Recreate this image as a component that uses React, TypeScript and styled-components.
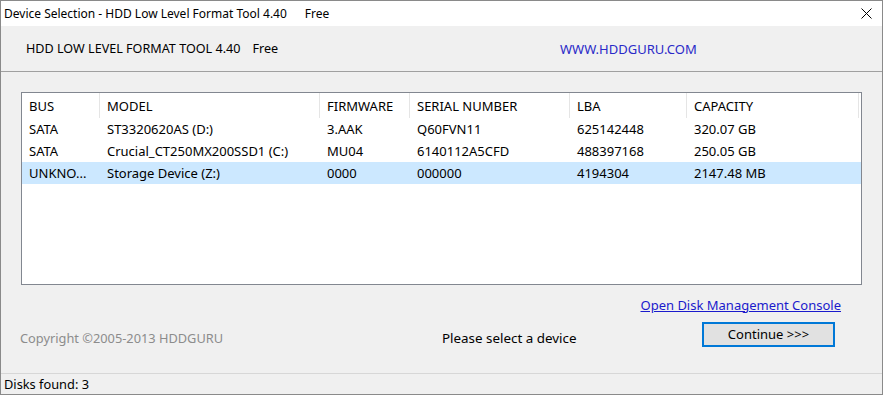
import React from "react";
import styled, { createGlobalStyle } from "styled-components";

const Global = createGlobalStyle`
  html, body { margin: 0; padding: 0; background: #ffffff; }
  body { font-family: "Noto Sans", "Open Sans", sans-serif; font-size: 12px; color: #000; }
  * { box-sizing: border-box; }
`;

const Window = styled.div`
  width: 883px;
  height: 395px;
  border: 1px solid #8a8a8a;
  display: flex;
  flex-direction: column;
  background: #f0f0f0;
  overflow: hidden;
`;

const TitleBar = styled.div`
  height: 25px;
  background: #ffffff;
  display: flex;
  align-items: center;
  padding-left: 3px;
  padding-right: 10px;
  flex-shrink: 0;
`;

const TitleText = styled.div`
  flex: 1;
  white-space: nowrap;
  font-size: 12px;
`;

const Suffix = styled.span<{ $gap: number }>`
  margin-left: ${(p) => p.$gap}px;
`;

const CloseBtn = styled.div`
  width: 12px;
  height: 12px;
  display: flex;
  align-items: center;
  justify-content: center;
`;

const Header = styled.div`
  height: 46px;
  display: flex;
  align-items: center;
  border-bottom: 1px solid #a0a0a0;
  flex-shrink: 0;
`;

const HeaderTitle = styled.div`
  width: 559px;
  padding-left: 25px;
  white-space: nowrap;
  font-size: 12.6px;
`;

const HeaderLink = styled.div`
  color: #2a2ac8;
  font-size: 13px;
`;

const Body = styled.div`
  flex: 1;
  display: flex;
  flex-direction: column;
  padding: 20px 20px 0 20px;
`;

const TableBox = styled.div`
  width: 841px;
  height: 193px;
  border: 1px solid #828790;
  background: #ffffff;
`;

const Row = styled.div<{ $head?: boolean; $selected?: boolean }>`
  display: grid;
  grid-template-columns: 78px 220px 90px 160px 117px 172px;
  height: ${(p) => (p.$head ? "25px" : "22px")};
  background: ${(p) => (p.$selected ? "#cce8ff" : "transparent")};
  align-items: center;
  font-size: 13px;
`;

const Cell = styled.div<{ $head?: boolean }>`
  padding-left: 7px;
  height: 100%;
  display: flex;
  align-items: center;
  white-space: nowrap;
  overflow: hidden;
  border-right: ${(p) => (p.$head ? "1px solid #e5e5e5" : "none")};
  padding-top: ${(p) => (p.$head ? "1px" : "0")};
`;

const LinkRow = styled.div`
  display: flex;
  justify-content: flex-end;
  padding-right: 21px;
  margin-top: 11px;
  height: 17px;
  align-items: center;
`;

const Link = styled.a`
  color: #1a1acc;
  text-decoration: underline;
  font-size: 13px;
  cursor: pointer;
`;

const BottomRow = styled.div`
  display: flex;
  align-items: flex-start;
  margin-top: 9px;
  height: 40px;
`;

const Copyright = styled.div`
  width: 422px;
  color: #8c8c8c;
  font-size: 12.8px;
  margin-top: 7px;
  margin-left: -1px;
`;

const Message = styled.div`
  width: 260px;
  font-size: 13.4px;
  margin-top: 7px;
`;

const Button = styled.button`
  width: 133px;
  height: 25px;
  border: 2px solid #0078d7;
  background: #e1e1e1;
  font-family: inherit;
  font-size: 13px;
  color: #000;
  padding: 0 0 2px 0;
  margin-left: 0;
`;

const StatusBar = styled.div`
  height: 21px;
  border-top: 1px solid #d7d7d7;
  display: flex;
  align-items: center;
  padding-left: 3px;
  font-size: 12.8px;
  flex-shrink: 0;
`;

const rows = [
  ["SATA", "ST3320620AS (D:)", "3.AAK", "Q60FVN11", "625142448", "320.07 GB"],
  ["SATA", "Crucial_CT250MX200SSD1 (C:)", "MU04", "6140112A5CFD", "488397168", "250.05 GB"],
  ["UNKNO...", "Storage Device (Z:)", "0000", "000000", "4194304", "2147.48 MB"],
];

const heads = ["BUS", "MODEL", "FIRMWARE", "SERIAL NUMBER", "LBA", "CAPACITY"];

export default function App() {
  return (
    <>
      <Global />
      <Window>
        <TitleBar>
          <TitleText>
            Device Selection - HDD Low Level Format Tool 4.40
            <Suffix $gap={18}>Free</Suffix>
          </TitleText>
          <CloseBtn>
            <svg width="11" height="11" viewBox="0 0 11 11">
              <path d="M0.5 0.5 L10.5 10.5 M10.5 0.5 L0.5 10.5" stroke="#000" strokeWidth="1" />
            </svg>
          </CloseBtn>
        </TitleBar>
        <Header>
          <HeaderTitle>
            HDD LOW LEVEL FORMAT TOOL 4.40
            <Suffix $gap={12}>Free</Suffix>
          </HeaderTitle>
          <HeaderLink>WWW.HDDGURU.COM</HeaderLink>
        </Header>
        <Body>
          <TableBox>
            <Row $head>
              {heads.map((h) => (
                <Cell $head key={h}>{h}</Cell>
              ))}
            </Row>
            {rows.map((r, i) => (
              <Row key={i} $selected={i === 2}>
                {r.map((c, j) => (
                  <Cell key={j}>{c}</Cell>
                ))}
              </Row>
            ))}
          </TableBox>
          <LinkRow>
            <Link>Open Disk Management Console</Link>
          </LinkRow>
          <BottomRow>
            <Copyright>Copyright ©2005-2013 HDDGURU</Copyright>
            <Message>Please select a device</Message>
            <Button>Continue &gt;&gt;&gt;</Button>
          </BottomRow>
        </Body>
        <StatusBar>Disks found: 3</StatusBar>
      </Window>
    </>
  );
}
